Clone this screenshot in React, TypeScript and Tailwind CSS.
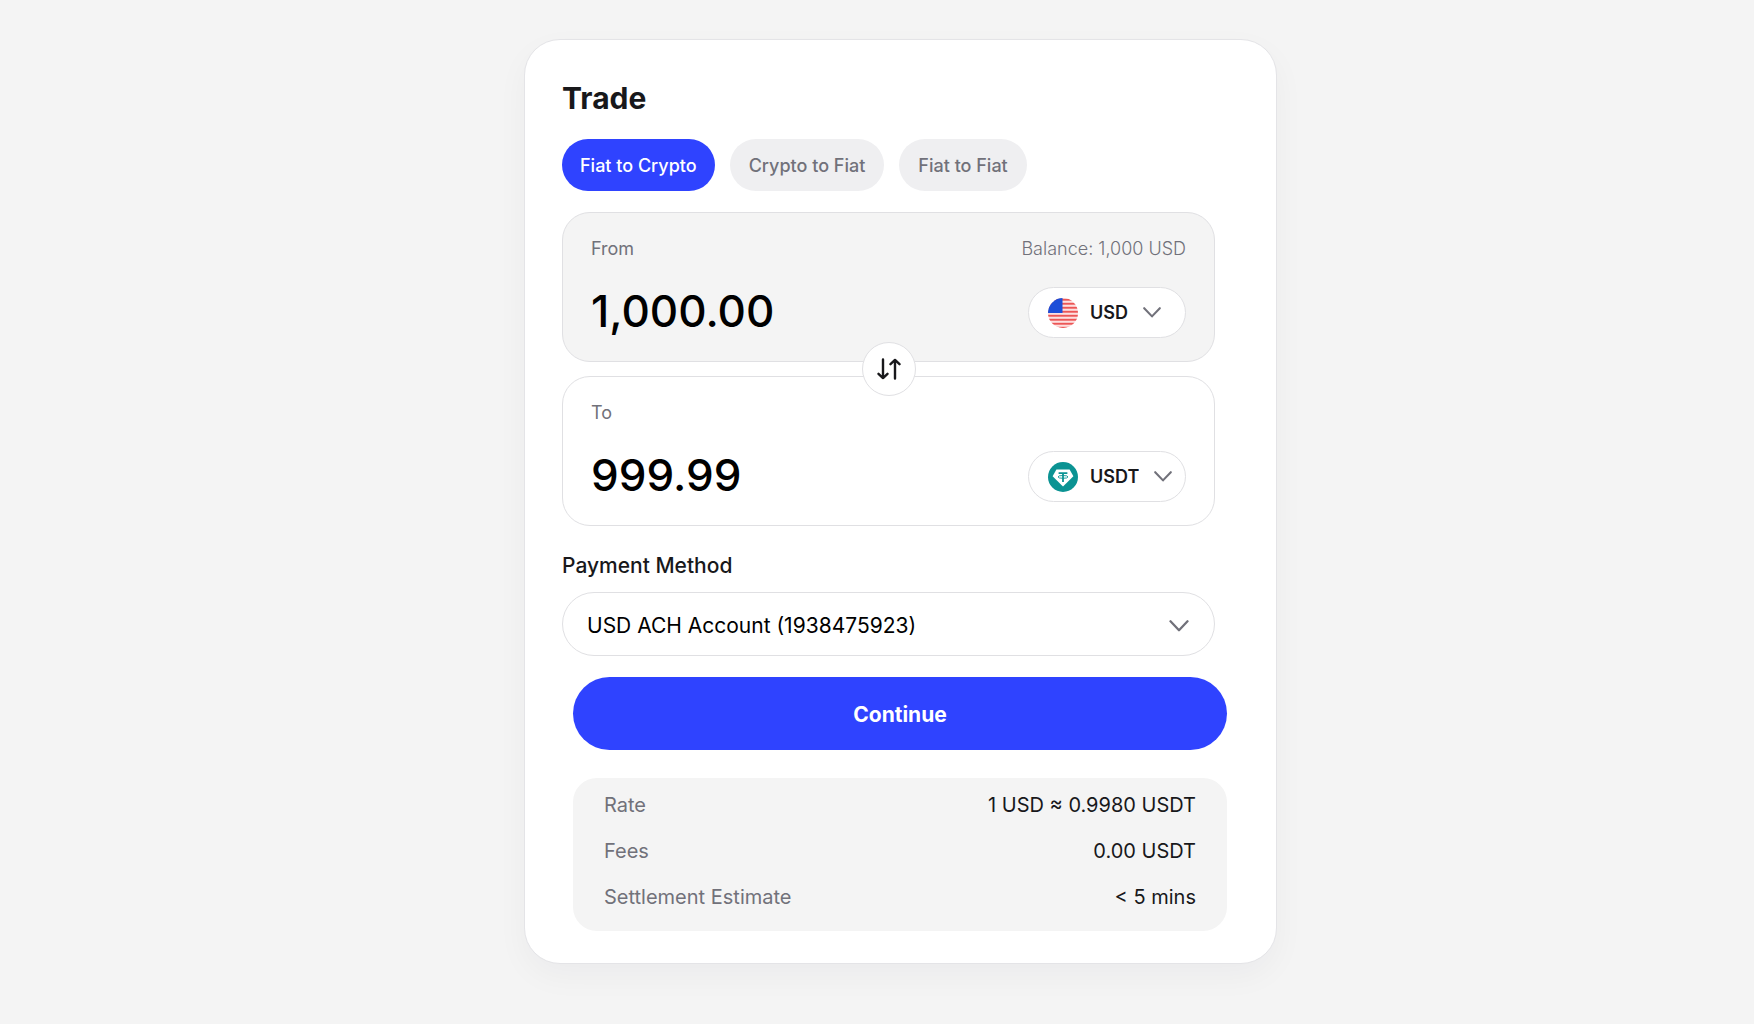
import { useState } from "react";
import type { ReactNode } from "react";

const rows = [
  { label: "Rate", value: "1 USD ≈ 0.9980 USDT" },
  { label: "Fees", value: "0.00 USDT" },
  { label: "Settlement Estimate", value: "< 5 mins" },
];

const tabs = ["Fiat to Crypto", "Crypto to Fiat", "Fiat to Fiat"];

function Chevron({ className }: { className: string }) {
  return (
    <svg viewBox="0 0 18 11" fill="none" aria-hidden="true" className={className}>
      <path d="M1.2 1.2 9 9.4l7.8-8.2" stroke="#71717a" strokeWidth="2.1" strokeLinecap="round" strokeLinejoin="round" />
    </svg>
  );
}

function UsFlag() {
  return (
    <svg viewBox="0 0 30 30" aria-hidden="true" className="size-[30px] shrink-0">
      <defs>
        <clipPath id="flag-circle">
          <circle cx="15" cy="15" r="15" />
        </clipPath>
      </defs>
      <g clipPath="url(#flag-circle)">
        <rect width="30" height="30" fill="#fde0e0" />
        {[0, 1, 2, 3, 4, 5, 6, 7].map((i) => (
          <rect key={i} y={i * 4 + 0.8} width="30" height="1.9" fill="#ec5656" />
        ))}
        <rect width="14.5" height="15" fill="#1d4ed8" />
      </g>
    </svg>
  );
}

function Tether() {
  return (
    <svg viewBox="0 0 30 30" aria-hidden="true" className="size-[30px] shrink-0">
      <circle cx="15" cy="15" r="15" fill="#0b9393" />
      <path d="M8.4 7.4h13.2l3.8 6.9L15 24.6 4.6 14.3z" fill="#fff" />
      <path d="M10.6 10.2h8.8v1.8h-3.5v8h-1.8v-8h-3.5z" fill="#0b9393" />
      <ellipse cx="15" cy="14.9" rx="5" ry="1.4" fill="none" stroke="#0b9393" strokeWidth="0.9" />
    </svg>
  );
}

function SwapIcon() {
  return (
    <svg viewBox="0 0 24 22" fill="none" stroke="#18181b" strokeWidth="2.4" strokeLinecap="round" strokeLinejoin="round" aria-hidden="true" className="h-[22px] w-6">
      <path d="M6 1.5v18.6M1.5 15.8 6 20.1l4.5-4.3" />
      <path d="M18 20.5V1.9M13.5 6.2 18 1.9l4.5 4.3" />
    </svg>
  );
}

type PanelProps = {
  id: string;
  label: string;
  amount: string;
  currency: string;
  balance?: string;
  tone: string;
  icon: ReactNode;
};

function AmountPanel({ id, label, amount, currency, balance, tone, icon }: PanelProps) {
  const [value, setValue] = useState(amount);
  return (
    <div className={`rounded-[28px] border border-[#e0e0e3] px-7 pt-6 pb-[23px] ${tone}`}>
      <div className="flex h-6 items-center justify-between text-[18px] leading-6 text-[#71717a]">
        <label htmlFor={id}>{label}</label>
        {balance && <span className="font-light">{balance}</span>}
      </div>
      <div className="mt-[26px] flex items-center justify-between gap-4">
        <input
          id={id}
          value={value}
          onChange={(e) => setValue(e.target.value)}
          inputMode="decimal"
          className="h-[51px] w-full min-w-0 bg-transparent pb-1 text-[44px] font-medium text-black outline-none"
        />
        <div className="flex h-[51px] w-[158px] shrink-0 items-center rounded-full border border-[#e0e0e3] bg-white pl-[19px]">
          {icon}
          <select
            aria-label={`${label} currency`}
            className="mr-[15px] ml-3 appearance-none bg-transparent text-[18px] font-semibold text-[#18181b] outline-none [field-sizing:content]"
          >
            <option>{currency}</option>
          </select>
          <Chevron className="h-[11px] w-[18px] shrink-0" />
        </div>
      </div>
    </div>
  );
}

export default function App() {
  const [active, setActive] = useState(0);
  return (
    <main className="flex min-h-screen items-start justify-center bg-[#f4f4f4] py-[39px] pl-[47px] font-['Inter',sans-serif] text-[#18181b]">
      <section className="w-full max-w-[753px] rounded-[36px] border border-[#e4e4e7] bg-white pt-[38px] pb-8 shadow-[0_12px_32px_rgba(24,24,40,0.04)]">
        <div className="pr-[61px] pl-[37px]">
          <h1 className="text-[30px] leading-10 font-bold">Trade</h1>
          <div className="mt-[21px] flex gap-[15px]">
            {tabs.map((tab, i) => (
              <button
                key={tab}
                type="button"
                onClick={() => setActive(i)}
                aria-pressed={active === i}
                className={`h-[52px] rounded-full text-[18px] font-medium ${
                  active === i ? "bg-[#2f43ff] px-[18px] text-white" : "bg-[#efeff1] px-[19px] text-[#71717a]"
                }`}
              >
                {tab}
              </button>
            ))}
          </div>
          <div className="relative mt-[21px] flex flex-col gap-[14px]">
            <AmountPanel id="from" label="From" amount="1,000.00" currency="USD" balance="Balance: 1,000 USD" tone="bg-[#f4f4f4]" icon={<UsFlag />} />
            <AmountPanel id="to" label="To" amount="999.99" currency="USDT" tone="bg-white" icon={<Tether />} />
            <button
              type="button"
              aria-label="Swap currencies"
              className="absolute top-1/2 left-1/2 flex size-[54px] -translate-1/2 items-center justify-center rounded-full border border-[#e0e0e3] bg-white"
            >
              <SwapIcon />
            </button>
          </div>
          <label htmlFor="method" className="mt-[26px] block text-[21px] leading-7 font-medium">
            Payment Method
          </label>
          <div className="mt-3 grid items-center">
            <select
              id="method"
              className="col-start-1 row-start-1 h-16 w-full appearance-none rounded-full border border-[#e0e0e3] bg-white pt-1 pr-16 pl-6 text-[21px] text-black outline-none"
            >
              <option>USD ACH Account (1938475923)</option>
            </select>
            <Chevron className="pointer-events-none col-start-1 row-start-1 mt-1 mr-[26px] h-3 w-5 justify-self-end" />
          </div>
        </div>
        <div className="mt-[21px] pr-[49px] pl-12">
          <button type="button" className="h-[73px] w-full rounded-full bg-[#2f43ff] pt-0.5 text-[21px] font-bold text-white">
            Continue
          </button>
          <dl className="mt-7 flex flex-col gap-[18px] rounded-[24px] bg-[#f4f4f4] px-[31px] pt-[13px] pb-5 text-[20px] leading-7">
            {rows.map((row) => (
              <div key={row.label} className="flex justify-between">
                <dt className="text-[#71717a]">{row.label}</dt>
                <dd>{row.value}</dd>
              </div>
            ))}
          </dl>
        </div>
      </section>
    </main>
  );
}
